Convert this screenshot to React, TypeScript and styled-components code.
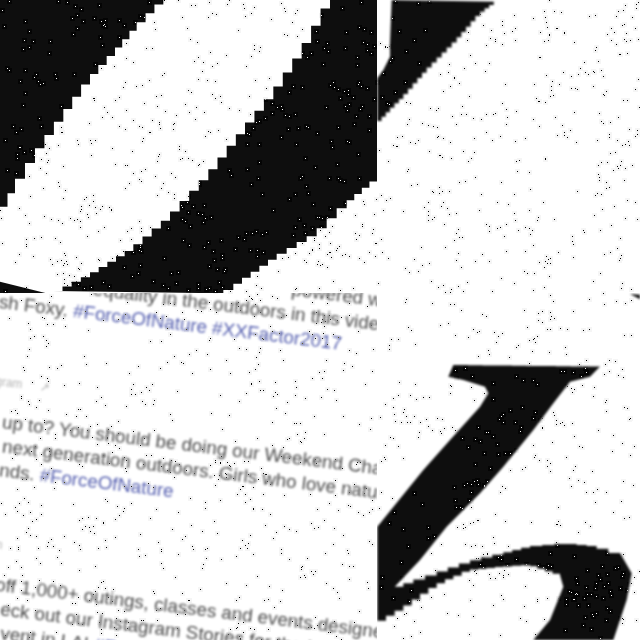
import React, { useMemo } from "react";
import styled, { createGlobalStyle } from "styled-components";

const Global = createGlobalStyle`
  html, body { margin: 0; padding: 0; background: #fff; overflow: hidden; }
`;

const INK = "#0e0e0e";

const Collage = styled.main`
  position: relative;
  width: 640px;
  height: 640px;
  display: grid;
  grid-template-columns: 377px 263px;
  grid-template-rows: 293px 347px;
  background: #fff;
  isolation: isolate;
`;

const Tile = styled.section`
  overflow: hidden;
  background: #fff;
  min-width: 0;
  min-height: 0;
`;

const Art = styled.svg<{ $soft?: boolean }>`
  display: block;
  width: 100%;
  height: 100%;
  filter: ${(p) => (p.$soft ? "blur(0.9px)" : "blur(0.3px)")};
`;

const Sheet = styled.article`
  width: 720px;
  margin: -51px 0 0 -60px;
  transform-origin: 60px 51px;
  transform: rotate(7deg);
  display: flex;
  flex-direction: column;
  font-family: "Liberation Sans", Arial, sans-serif;
  font-size: 18.8px;
  line-height: 24px;
  color: #4a4a4a;
  filter: blur(0.95px);
`;

const Post = styled.div``;

const Line = styled.div<{ $indent: number }>`
  white-space: nowrap;
  padding-left: ${(p) => p.$indent}px;
`;

const Tag = styled.span`
  color: #5660b0;
`;

const Caption = styled.div<{ $top: number }>`
  margin: ${(p) => p.$top}px 0 20px;
  padding-left: 40px;
  display: flex;
  align-items: center;
  gap: 18px;
  height: 16px;
  font-size: 12px;
  color: #b4b4b4;
`;

const NoiseLayer = styled.svg`
  position: absolute;
  inset: 0;
  width: 640px;
  height: 640px;
  pointer-events: none;
  mix-blend-mode: difference;
`;

type P = [number, number];

function stepped(pts: P[], sx: number): string {
  let out = "";
  for (let i = 0; i < pts.length - 1; i++) {
    const [ax, ay] = pts[i];
    const [bx, by] = pts[i + 1];
    const n = Math.max(1, Math.ceil(Math.abs(bx - ax) / sx));
    for (let k = 0; k < n; k++) {
      const x0 = ax + ((bx - ax) * k) / n;
      const x1 = ax + ((bx - ax) * (k + 1)) / n;
      const y = ay + ((by - ay) * (k + 0.5)) / n;
      out += `L${x0.toFixed(1)} ${y.toFixed(1)}L${x1.toFixed(1)} ${y.toFixed(1)}`;
    }
  }
  return out;
}

const line = (pts: P[]) => pts.map(([x, y]) => `L${x} ${y}`).join("");

function useNoise() {
  return useMemo(() => {
    let seed = 20170607;
    const rnd = () => {
      seed = (seed * 1664525 + 1013904223) >>> 0;
      return seed / 4294967296;
    };
    let dots = "";
    let halos = "";
    const add = (x: number, y: number) => {
      const px = Math.floor(x);
      const py = Math.floor(y);
      if (px < 0 || py < 0 || px > 639 || py > 639) return;
      dots += `M${px} ${py}h1v1h-1z`;
      halos += `M${px - 2} ${py - 2}h5v5h-5z`;
    };
    for (let i = 0; i < 1200; i++) add(rnd() * 640, rnd() * 640);
    for (let c = 0; c < 150; c++) {
      const cx = rnd() * 640;
      const cy = rnd() * 640;
      const count = 3 + Math.floor(rnd() * 7);
      for (let i = 0; i < count; i++) {
        add(cx + (rnd() - 0.5) * 30, cy + (rnd() - 0.5) * 26);
      }
    }
    return { dots, halos };
  }, []);
}

const shapeA =
  "M0 0L490 0" +
  stepped(
    [[490, 0], [410, 80], [345, 155], [270, 235], [190, 345], [105, 465], [45, 560], [0, 640]],
    30
  ) +
  "Z";

const shapeB =
  "M990 0" +
  stepped(
    [[990, 0], [905, 155], [820, 280], [735, 385], [625, 525], [510, 650], [400, 745], [270, 825], [160, 880]],
    30
  ) +
  "L670 880" +
  stepped(
    [[670, 880], [700, 860], [830, 770], [950, 700], [1040, 610], [1131, 535]],
    30
  ) +
  "L1131 0Z";

const shapeRight =
  "M65 0" +
  line([[60, 130], [60, 170], [40, 210], [22, 235], [22, 370]]) +
  stepped([[22, 370], [60, 330], [100, 290], [170, 210], [260, 120], [330, 40], [385, 0]], 16) +
  "Z";

const shapeLetter =
  "M22 740" +
  line([[160, 570], [240, 480], [330, 380], [355, 340], [345, 320], [280, 300], [235, 290], [250, 255]]) +
  stepped([[250, 255], [690, 260]], 46) +
  line([[660, 290], [600, 305], [550, 370], [490, 450], [400, 560], [330, 640], [230, 740], [150, 840], [70, 925]]) +
  stepped([[70, 925], [130, 905], [200, 880], [300, 845], [400, 820], [480, 800], [590, 790], [680, 800], [750, 825]], 38) +
  line([[785, 880], [770, 960], [730, 1080], [490, 1080], [540, 1020], [580, 920], [570, 885]]) +
  stepped([[570, 885], [480, 855], [400, 860], [300, 870], [200, 915], [100, 985], [22, 1030]], 28) +
  "Z";

export default function App() {
  const { dots, halos } = useNoise();
  return (
    <Collage>
      <Global />
      <Tile>
        <Art viewBox="0 0 377 293">
          <g transform="scale(0.33333)" fill={INK}>
            <path d={shapeA} />
            <path d={shapeB} />
            <path d="M0 845L140 880L0 880Z" />
          </g>
        </Art>
      </Tile>
      <Tile>
        <Art $soft viewBox="377 0 263 293">
          <g transform="translate(370 0) scale(0.33333)" fill={INK}>
            <path d={shapeRight} />
          </g>
        </Art>
      </Tile>
      <Tile>
        <Sheet>
          <Post>
            <Line $indent={349}>powered with</Line>
            <Line $indent={152}>equality in the outdoors in this video</Line>
            <Line $indent={32}>Fresh Foxy. <Tag>#ForceOfNature</Tag> <Tag>#XXFactor2017</Tag></Line>
          </Post>
          <Caption $top={59}>Instagram <span>↗</span></Caption>
          <Post>
            <Line $indent={78}>up to? You should be doing our Weekend Challenge</Line>
            <Line $indent={81}>next generation outdoors. Girls who love nature</Line>
            <Line $indent={81}>nds. <Tag>#ForceOfNature</Tag></Line>
          </Post>
          <Caption $top={54}>Instagram</Caption>
          <Post>
            <Line $indent={91}>off 1,000+ outings, classes and events designed</Line>
            <Line $indent={99}>eck out our Instagram Stories for the latest</Line>
            <Line $indent={102}>vent in LA! <Tag>#ForceOfNature</Tag></Line>
          </Post>
        </Sheet>
      </Tile>
      <Tile>
        <Art $soft viewBox="377 293 263 347">
          <g transform="translate(370 280) scale(0.33333)" fill={INK}>
            <path d={shapeLetter} />
            <path d="M780 42L810 44L810 58Z" />
          </g>
        </Art>
      </Tile>
      <NoiseLayer viewBox="0 0 640 640" shapeRendering="crispEdges">
        <path d={halos} fill="#0a0a0a" />
        <path d={dots} fill="#fff" />
      </NoiseLayer>
    </Collage>
  );
}
